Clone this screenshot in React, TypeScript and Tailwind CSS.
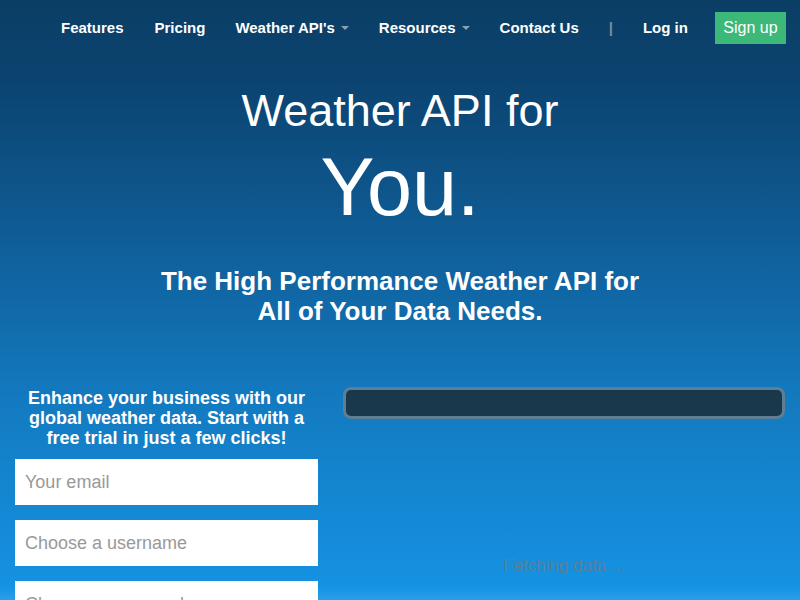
function Caret() {
  return <span className="ml-[6px] inline-block h-0 w-0 border-x-[4px] border-t-[4px] border-x-transparent border-t-[#8a9fb0] align-middle" />;
}

export default function App() {
  const font = { fontFamily: '"Liberation Sans", Arial, sans-serif' };
  return (
    <div
      className="min-h-[600px] w-[800px] overflow-hidden bg-[linear-gradient(180deg,#0a3e65_0px,#0b4370_80px,#0f5a92_220px,#137ac0_400px,#1592e2_586px,#2a9fe8_600px)] text-white"
      style={font}
    >
      <nav className="flex h-[56px] items-center pl-[61px] text-[15px] font-bold">
        <a className="mr-[31px]">Features</a>
        <a className="mr-[30px]">Pricing</a>
        <a className="mr-[30px] flex items-center">Weather API's<Caret /></a>
        <a className="mr-[30px] flex items-center">Resources<Caret /></a>
        <a className="mr-[30px]">Contact Us</a>
        <span className="mr-[30px] text-[#7b8d9b]">|</span>
        <a className="mr-[27px]">Log in</a>
        <a className="flex h-[32px] w-[71px] items-center justify-center bg-[#3cb878] text-[16px] font-normal">Sign up</a>
      </nav>

      <header className="flex flex-col items-center">
        <h1 className="mt-[29px] text-[45px] leading-[52px] font-normal">Weather API for</h1>
        <p className="mt-[9px] text-[81px] leading-[82px]">You.</p>
        <h2 className="mt-[38px] text-center text-[26px] leading-[30px] font-bold">
          The High Performance Weather API for
          <br />
          All of Your Data Needs.
        </h2>
      </header>

      <section className="mt-[62px] flex">
        <div className="w-[333px] px-[15px]">
          <p className="text-center text-[18px] leading-[20px] font-bold">
            Enhance your business with our global weather data. Start with a free trial in just a few clicks!
          </p>
          <div className="mt-[11px] flex flex-col gap-[15px]">
            {["Your email", "Choose a username", "Choose a password"].map((p) => (
              <input
                key={p}
                placeholder={p}
                className="h-[46px] w-full bg-white px-[10px] text-[18px] text-[#333] outline-none placeholder:text-[#999]"
                style={font}
              />
            ))}
          </div>
        </div>
        <div className="ml-[10px] flex w-[442px] flex-col">
          <div className="mt-[-1px] h-[32px] rounded-[8px] border-[3px] border-[#5d7e93] bg-[#19384b]" />
          <p className="mt-[134px] text-center text-[17px] text-[#5b7f98]">Fetching data ...</p>
        </div>
      </section>
    </div>
  );
}
